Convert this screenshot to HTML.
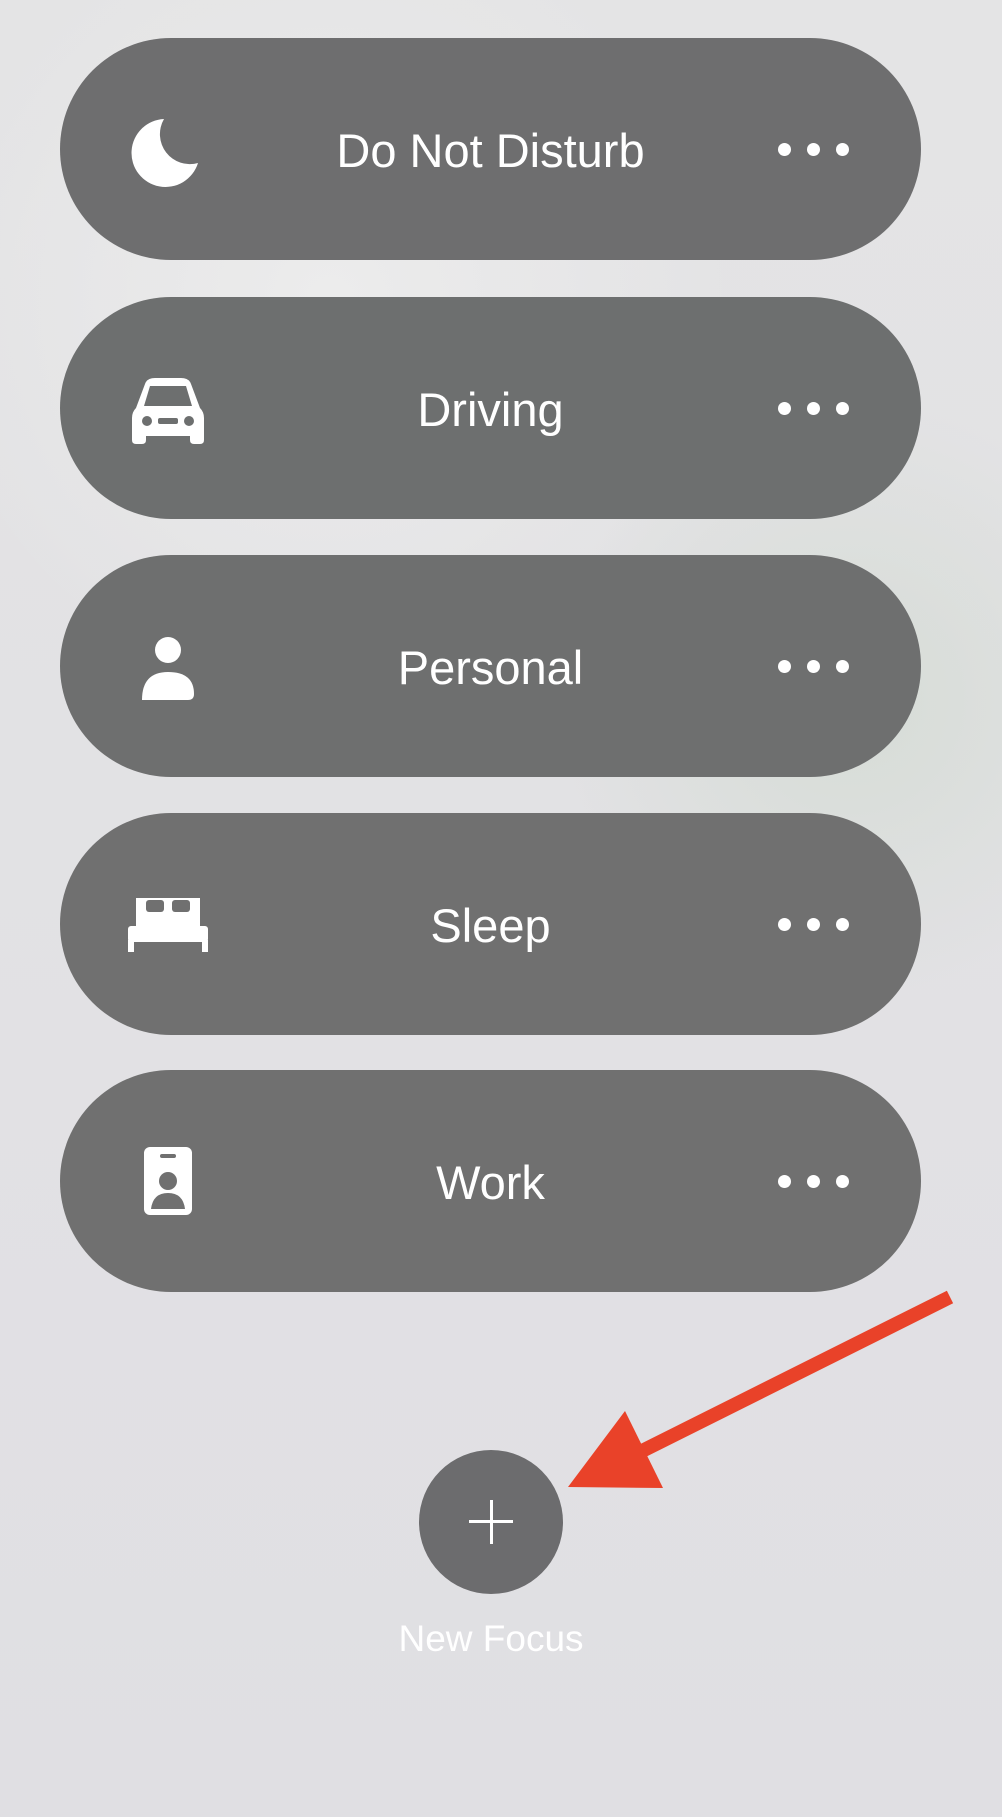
<!DOCTYPE html>
<html><head><meta charset="utf-8"><style>
html,body{margin:0;padding:0}
body{width:1002px;height:1817px;position:relative;overflow:hidden;font-family:"Liberation Sans",sans-serif;
background:radial-gradient(circle at 330px 300px,#ececec 0,rgba(236,236,236,0) 400px),radial-gradient(circle at 850px 700px,#d6dcd6 0,rgba(214,220,214,0) 300px),linear-gradient(#e4e4e5,#e0dfe3);}
.pill{position:absolute;left:60px;width:861px;height:222px;border-radius:111px;background:#707070;color:#fff;}
.pill .t{position:absolute;left:0;right:0;top:2px;line-height:222px;text-align:center;font-size:47px;}
.pill .d{position:absolute;left:718px;top:105px;}
.pill .d i{position:absolute;top:0;width:13px;height:13px;border-radius:50%;background:#fff;}
.pill svg.ic{position:absolute;left:58px;top:71px;width:100px;height:80px}
</style></head><body>
<div class="pill" style="top:38px;background:#6e6e6f"><svg class="ic" viewBox="0 0 100 80"><path d="M46 10 A34 34 0 1 0 80 54 A30 30 0 0 1 46 10Z" fill="#fff"/></svg><div class="t">Do Not Disturb</div><div class="d"><i style="left:0"></i><i style="left:29px"></i><i style="left:58px"></i></div></div>
<div class="pill" style="top:297px;background:#6d6f6f"><svg class="ic" viewBox="0 0 100 80"><path d="M18 40 L27 16 Q29 10 37 10 H63 Q71 10 73 16 L82 40 Q86 44 86 50 V72 Q86 76 82 76 H76 Q72 76 72 72 V68 H28 V72 Q28 76 24 76 H18 Q14 76 14 72 V50 Q14 44 18 40Z" fill="#fff"/><path d="M26 38 L32 18 H68 L74 38Z" fill="#6d6f6f"/><circle cx="29" cy="53" r="5" fill="#6d6f6f"/><circle cx="71" cy="53" r="5" fill="#6d6f6f"/><rect x="40" y="50" width="20" height="6" rx="2" fill="#6d6f6f"/></svg><div class="t">Driving</div><div class="d"><i style="left:0"></i><i style="left:29px"></i><i style="left:58px"></i></div></div>
<div class="pill" style="top:555px;background:#6e6f6f"><svg class="ic" viewBox="0 0 100 80"><circle cx="50" cy="24" r="13" fill="#fff"/><path d="M24 74 Q24 46 50 46 Q76 46 76 68 Q76 74 70 74Z" fill="#fff"/></svg><div class="t">Personal</div><div class="d"><i style="left:0"></i><i style="left:29px"></i><i style="left:58px"></i></div></div>
<div class="pill" style="top:813px"><svg class="ic" viewBox="0 0 100 80"><path d="M18 14 H82 V42 H18Z" fill="#fff"/><rect x="28" y="16" width="18" height="12" rx="3" fill="#707070"/><rect x="54" y="16" width="18" height="12" rx="3" fill="#707070"/><rect x="10" y="42" width="80" height="16" rx="3" fill="#fff"/><rect x="10" y="56" width="6" height="12" fill="#fff"/><rect x="84" y="56" width="6" height="12" fill="#fff"/></svg><div class="t">Sleep</div><div class="d"><i style="left:0"></i><i style="left:29px"></i><i style="left:58px"></i></div></div>
<div class="pill" style="top:1070px"><svg class="ic" viewBox="0 0 100 80"><rect x="26" y="6" width="48" height="68" rx="6" fill="#fff"/><rect x="42" y="13" width="16" height="4" rx="2" fill="#707070"/><circle cx="50" cy="40" r="9" fill="#707070"/><path d="M33 68 Q35 52 50 52 Q65 52 67 68Z" fill="#707070"/></svg><div class="t">Work</div><div class="d"><i style="left:0"></i><i style="left:29px"></i><i style="left:58px"></i></div></div>
<div style="position:absolute;left:419px;top:1450px;width:144px;height:144px;border-radius:50%;background:#6c6c6e"></div>
<div style="position:absolute;left:469px;top:1520px;width:44px;height:3px;background:#fff"></div>
<div style="position:absolute;left:490px;top:1500px;width:3px;height:44px;background:#fff"></div>
<div style="position:absolute;left:291px;width:400px;top:1618px;text-align:center;color:#fff;font-size:37px">New Focus</div>
<svg style="position:absolute;left:0;top:0" width="1002" height="1817"><line x1="950" y1="1297" x2="640" y2="1452" stroke="#e94229" stroke-width="14"/><path d="M568 1487 L625 1411 L663 1488Z" fill="#e94229"/></svg>
</body></html>
